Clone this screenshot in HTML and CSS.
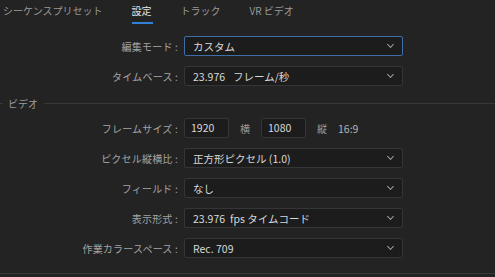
FILE: index.html
```html
<!DOCTYPE html>
<html lang="ja">

<head>
    <meta charset="UTF-8">
    <meta name="viewport" content="width=device-width, initial-scale=1.0">
    <title>シーケンス設定</title>
    <link rel="stylesheet" href="styles.css">
</head>

<body>
    <div class="tabs">
        <div class="tab">シーケンスプリセット</div>
        <div class="tab active">設定</div>
        <div class="tab">トラック</div>
        <div class="tab">VR ビデオ</div>
    </div>

    <div class="form first">
        <div class="row">
            <label class="label">編集モード :</label>
            <div class="select focused"><span>カスタム</span><i class="chev"></i></div>
        </div>
        <div class="row">
            <label class="label">タイムベース :</label>
            <div class="select"><span>23.976<span class="gap"></span>フレーム/秒</span><i class="chev"></i></div>
        </div>
    </div>

    <div class="section-title">
        <span class="line short"></span>
        <span class="title">ビデオ</span>
        <span class="line"></span>
    </div>

    <div class="form">
        <div class="row">
            <label class="label">フレームサイズ :</label>
            <div class="size-fields">
                <div class="num">1920</div>
                <span class="unit">横</span>
                <div class="num">1080</div>
                <span class="unit">縦</span>
                <span class="ratio">16:9</span>
            </div>
        </div>
        <div class="row">
            <label class="label">ピクセル縦横比 :</label>
            <div class="select"><span>正方形ピクセル (1.0)</span><i class="chev"></i></div>
        </div>
        <div class="row">
            <label class="label">フィールド :</label>
            <div class="select"><span>なし</span><i class="chev"></i></div>
        </div>
        <div class="row">
            <label class="label">表示形式 :</label>
            <div class="select"><span>23.976<span class="gap small"></span>fps タイムコード</span><i class="chev"></i></div>
        </div>
        <div class="row">
            <label class="label">作業カラースペース :</label>
            <div class="select"><span>Rec. 709</span><i class="chev"></i></div>
        </div>
    </div>

    <div class="bottom-line"></div>
</body>

</html>
```

FILE: styles.css
```css
body {
    margin: 0;
    background: #232323;
    color: #a8a8a8;
    font-family: "Noto Sans CJK JP", "Noto Sans", sans-serif;
    font-size: 10px;
    width: 495px;
    height: 277px;
    overflow: hidden;
}

.tabs {
    display: flex;
    gap: 29px;
    padding-left: 3px;
    height: 24px;
}

.tab {
    position: relative;
    line-height: 22px;
    color: #9a9a9a;
    font-size: 10px;
}

.tab.active {
    color: #e6e6e6;
}

.tab.active:after {
    content: "";
    position: absolute;
    left: 0;
    right: -1px;
    top: 22px;
    height: 2px;
    background: #2f80d6;
}

.form {
    display: flex;
    flex-direction: column;
    gap: 10px;
}

.form.first {
    margin-top: 12px;
}

.row {
    display: flex;
    align-items: center;
    height: 20px;
}

.label {
    width: 178px;
    text-align: right;
    color: #a3a3a3;
    flex-shrink: 0;
    margin-right: 6px;
    letter-spacing: 0.2px;
}

.select {
    width: 219px;
    height: 20px;
    box-sizing: border-box;
    background: #1c1c1c;
    border: 1px solid #353535;
    border-radius: 2px;
    display: flex;
    align-items: center;
    justify-content: space-between;
    padding: 0 8px 0 8px;
    color: #d8d8d8;
    font-size: 10.5px;
}

.select.focused {
    border-color: #3d6ea8;
}

.gap {
    display: inline-block;
    width: 8px;
}

.gap.small {
    width: 5px;
}

.chev {
    width: 4px;
    height: 4px;
    border-right: 1px solid #9c9c9c;
    border-bottom: 1px solid #9c9c9c;
    transform: rotate(45deg);
    margin-top: -3px;
    margin-right: 1px;
}

.section-title {
    display: flex;
    align-items: center;
    margin-top: 10px;
    height: 14px;
    margin-bottom: 8px;
}

.line {
    flex: 1;
    height: 1px;
    background: #383838;
}

.line.short {
    flex: 0 0 3px;
}

.title {
    padding: 0 6px 0 5px;
    color: #9c9c9c;
}

.size-fields {
    display: flex;
    align-items: center;
    color: #9a9a9a;
}

.num {
    width: 45px;
    height: 20px;
    box-sizing: border-box;
    background: #1c1c1c;
    border: 1px solid #353535;
    border-radius: 2px;
    padding-left: 6px;
    line-height: 18px;
    color: #d8d8d8;
    font-size: 10.5px;
}

.unit {
    margin: 0 11px 0 11px;
}

.ratio {
    color: #b4b4b4;
    font-size: 10.5px;
}

.bottom-line {
    margin-top: 15px;
    height: 1px;
    background: #383838;
}
```
